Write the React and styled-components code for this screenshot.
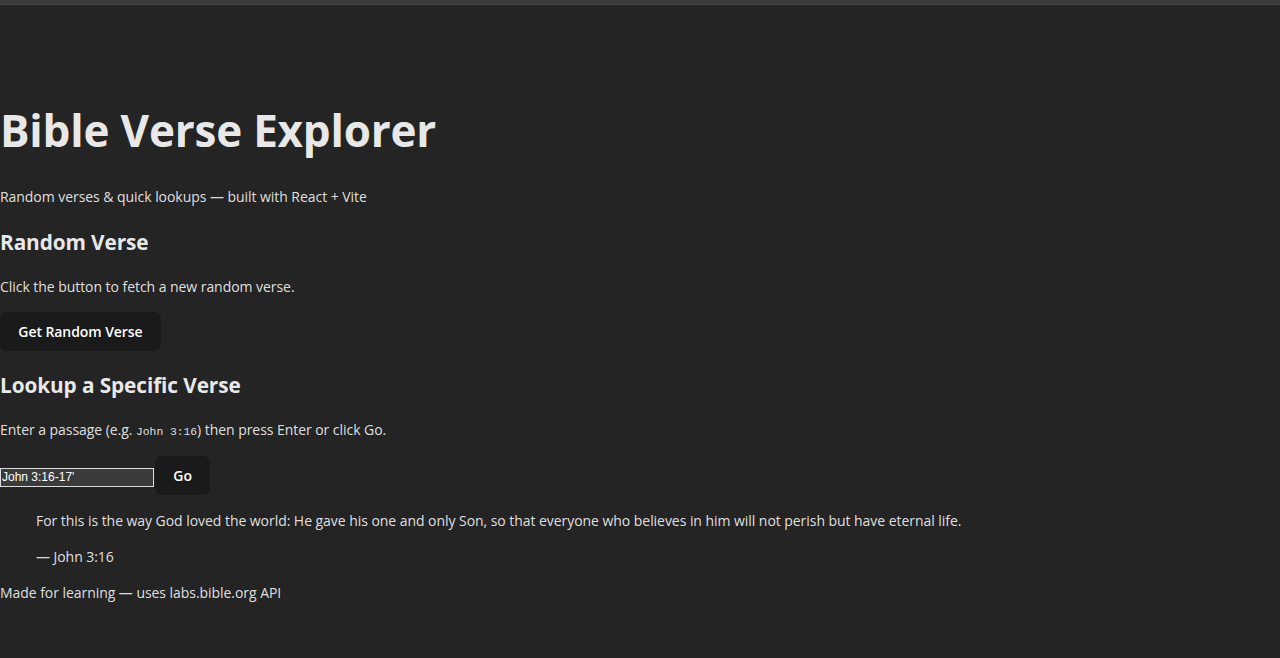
import { useState } from 'react';
import styled, { createGlobalStyle } from 'styled-components';

const GlobalStyle = createGlobalStyle`
  html, body {
    margin: 0;
    padding: 0;
    background: #242424;
  }
  body {
    color: rgba(255, 255, 255, 0.87);
    font-family: "Open Sans", "Noto Sans", sans-serif;
    font-size: 14px;
    letter-spacing: -0.05px;
    line-height: 21.6px;
    min-height: 100vh;
  }
`;

const TopStrip = styled.div`
  height: 5px;
  background: #3b3b3b;
  border-bottom: 1px solid #444;
  box-sizing: border-box;
`;

const Page = styled.main`
  padding: 69px 0 0;
`;

const Title = styled.h1`
  font-size: 44px;
  letter-spacing: -0.2px;
  line-height: 50.6px;
  font-weight: 700;
  margin: 30.9px 0;
  color: #e8e8e8;
`;

const Text = styled.p`
  margin: 14.4px 0;
`;

const SectionTitle = styled.h2`
  font-size: 20.8px;
  letter-spacing: -0.1px;
  line-height: 32.4px;
  font-weight: 700;
  margin: 17.9px 0;
  color: #e8e8e8;
`;

const Button = styled.button`
  border-radius: 7.2px;
  border: 1px solid transparent;
  padding: 7.7px 17.3px;
  font-size: 14px;
  line-height: 21.6px;
  letter-spacing: -0.07px;
  font-weight: 600;
  font-family: inherit;
  color: #ffffff;
  background: #1a1a1a;
  cursor: pointer;
`;

const Code = styled.code`
  font-family: "Liberation Mono", "DejaVu Sans Mono", monospace;
  font-size: 11.3px;
  line-height: 1;
  letter-spacing: 0;
`;

const LookupRow = styled.div`
  display: flex;
  align-items: baseline;
  gap: 1px;
  margin-top: 15.6px;
`;

const PassageInput = styled.input`
  width: 150px;
  font-family: "Liberation Sans", Arial, sans-serif;
  font-size: 12px;
  line-height: 15px;
  padding: 1px 1px;
  border: 1px solid #dcdcdc;
  background: #3b3b3b;
  color: #ffffff;
  outline: none;
`;

const Quote = styled.blockquote`
  margin: 14.4px 36px;
`;

export default function App() {
  const [passage, setPassage] = useState("John 3:16-17'");

  return (
    <>
      <GlobalStyle />
      <TopStrip />
      <Page>
        <Title>Bible Verse Explorer</Title>
        <Text>Random verses &amp; quick lookups — built with React + Vite</Text>

        <SectionTitle>Random Verse</SectionTitle>
        <Text>Click the button to fetch a new random verse.</Text>
        <Button>Get Random Verse</Button>

        <SectionTitle>Lookup a Specific Verse</SectionTitle>
        <Text>
          Enter a passage (e.g. <Code>John 3:16</Code>) then press Enter or click Go.
        </Text>
        <LookupRow>
          <PassageInput value={passage} onChange={e => setPassage(e.target.value)} />
          <Button>Go</Button>
        </LookupRow>

        <Quote>
          <Text>
            For this is the way God loved the world: He gave his one and only Son, so that everyone who believes in him will not perish but have eternal life.
          </Text>
          <Text>— John 3:16</Text>
        </Quote>

        <Text>Made for learning — uses labs.bible.org API</Text>
      </Page>
    </>
  );
}
